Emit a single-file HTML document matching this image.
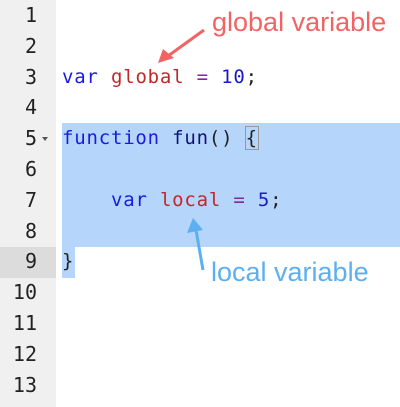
<!DOCTYPE html>
<html><head><style>
body{margin:0;width:400px;height:407px;overflow:hidden;background:#fff;position:relative;font-family:"DejaVu Sans Mono","Liberation Mono",monospace}
.g{position:absolute;left:0;top:0;width:56px;height:407px;background:#f0f0f0}
.n{position:absolute;left:0;width:37px;text-align:right;font-size:20px;color:#222;height:30.8px;line-height:30.8px}
.c{position:absolute;left:62px;font-size:19px;height:30.8px;line-height:30.8px;white-space:pre;color:#222;letter-spacing:0.8px}
.k{color:#1a1ae0}.v{color:#c0282a}.o{color:#7a2a9a}.num{color:#1a1ac0}.f{color:#10107a}
.sel{position:absolute;background:#b5d5fb}
.t{position:absolute;font-family:"Liberation Sans",sans-serif;font-size:27px}
</style></head><body>
<div class="g"></div>
<div style="position:absolute;left:0;top:247px;width:56px;height:31px;background:#dcdcdc"></div>
<div class="sel" style="left:62px;top:123px;width:338px;height:124px"></div>
<div class="sel" style="left:62px;top:247px;width:13px;height:31px"></div>
<div class="n" style="top:0">1</div>
<div class="n" style="top:30.8px">2</div>
<div class="n" style="top:61.6px">3</div>
<div class="n" style="top:92.4px">4</div>
<div class="n" style="top:123.2px">5</div>
<div style="position:absolute;left:42px;top:137px;width:0;height:0;border-left:3px solid transparent;border-right:3px solid transparent;border-top:4px solid #555"></div>
<div class="n" style="top:154px">6</div>
<div class="n" style="top:184.8px">7</div>
<div class="n" style="top:215.6px">8</div>
<div class="n" style="top:246.4px">9</div>
<div class="n" style="top:277.2px">10</div>
<div class="n" style="top:308px">11</div>
<div class="n" style="top:338.8px">12</div>
<div class="n" style="top:369.6px">13</div>
<div class="c" style="top:61.6px"><span class="k">var</span> <span class="v">global</span> <span class="o">=</span> <span class="num">10</span>;</div>
<div class="c" style="top:123.2px"><span class="k">function</span> <span class="f">fun</span>() <span style="outline:1px solid #999">{</span></div>
<div class="c" style="top:184.8px">    <span class="k">var</span> <span class="v">local</span> <span class="o">=</span> <span class="num">5</span>;</div>
<div class="c" style="top:246.4px">}</div>
<div class="t" style="left:212px;top:7px;color:#f26464">global variable</div>
<div class="t" style="left:211px;top:257px;color:#5cb0f2">local variable</div>
<svg style="position:absolute;left:0;top:0" width="400" height="407">
<line x1="204" y1="30" x2="168" y2="56" stroke="#f26464" stroke-width="3"/>
<polygon points="158,63 163,49 174,58" fill="#f26464"/>
<line x1="203" y1="270" x2="196" y2="230" stroke="#5cb0f2" stroke-width="3"/>
<polygon points="193,218 187,233 203,230" fill="#5cb0f2"/>
</svg>
</body></html>
